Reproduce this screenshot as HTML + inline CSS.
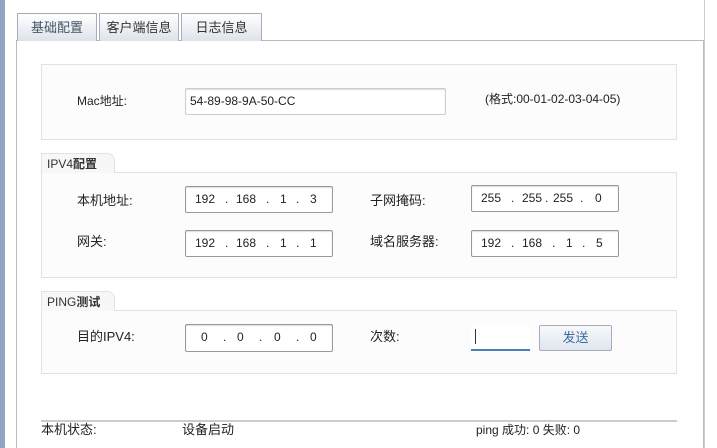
<!DOCTYPE html>
<html><head><meta charset="utf-8"><style>
*{margin:0;padding:0;box-sizing:border-box}
html,body{width:717px;height:448px;overflow:hidden}
body{background:#fff;position:relative;font-family:"Liberation Sans","Noto Sans CJK SC",sans-serif;font-size:12px;color:#222}
.a{position:absolute}
.tab{position:absolute;top:13px;height:28px;border:1px solid #aab;border-bottom:none;background:linear-gradient(#fff,#dde3ea);text-align:center;line-height:27px;font-size:13px;color:#333}
.box{position:absolute;border:1px solid #e2e2e2;background:#fcfcfc}
.in{position:absolute;border:1px solid #999;border-radius:2px;background:#fff;box-shadow:inset 0 1px 1px #ddd;font-size:12px;line-height:25px}
.lbl{position:absolute;font-size:12px;line-height:16px}
.gt{position:absolute;height:20px;border:1px solid #e2e2e2;border-bottom:none;border-radius:0 8px 0 0;background:#f7f7f7;padding-left:5px;line-height:20px;font-size:12px;color:#333}
.ip span{position:absolute;top:0}
</style></head><body>
<div class="a" style="left:0;top:0;width:5px;height:448px;background:#8ea6c4"></div>
<div class="a" style="left:704px;top:0;width:13px;height:448px;background:#fff;border-left:1px solid #ccc"></div>
<div class="a" style="left:16px;top:40px;width:688px;height:410px;border:1px solid #bbb"></div>
<div class="tab" style="left:17px;width:80px;color:#456">基础配置</div>
<div class="tab" style="left:99px;width:80px">客户端信息</div>
<div class="tab" style="left:181px;width:81px">日志信息</div>

<div class="box" style="left:41px;top:64px;width:636px;height:76px"></div>
<div class="lbl" style="left:77px;top:93px">Mac地址:</div>
<div class="in" style="left:185px;top:88px;width:261px;border-color:#ccc;padding-left:4px">54-89-98-9A-50-CC</div>
<div class="lbl" style="left:485px;top:91px">(格式:00-01-02-03-04-05)</div>

<div class="box" style="left:41px;top:172px;width:636px;height:106px"></div>
<div class="gt" style="left:41px;top:153px;width:74px">IPV4<b>配置</b></div>
<div class="lbl" style="left:77px;top:193px;font-size:13px">本机地址:</div>
<div class="lbl" style="left:77px;top:234px;font-size:13px">网关:</div>
<div class="lbl" style="left:370px;top:193px;font-size:13px">子网掩码:</div>
<div class="lbl" style="left:370px;top:234px;font-size:13px">域名服务器:</div>
<div class="in ip" style="left:185px;top:186px;width:148px;height:27px"><span style="left:9px">192</span><span style="left:39px">.</span><span style="left:50px">168</span><span style="left:80px">.</span><span style="left:94px">1</span><span style="left:110px">.</span><span style="left:124px">3</span></div>
<div class="in ip" style="left:185px;top:230px;width:148px;height:27px"><span style="left:9px">192</span><span style="left:39px">.</span><span style="left:50px">168</span><span style="left:80px">.</span><span style="left:94px">1</span><span style="left:110px">.</span><span style="left:124px">1</span></div>
<div class="in ip" style="left:471px;top:185px;width:148px;height:27px"><span style="left:9px">255</span><span style="left:39px">.</span><span style="left:50px">255</span><span style="left:73px">.</span><span style="left:81px">255</span><span style="left:108px">.</span><span style="left:123px">0</span></div>
<div class="in ip" style="left:471px;top:230px;width:148px;height:27px"><span style="left:9px">192</span><span style="left:39px">.</span><span style="left:50px">168</span><span style="left:80px">.</span><span style="left:94px">1</span><span style="left:110px">.</span><span style="left:124px">5</span></div>

<div class="box" style="left:41px;top:310px;width:636px;height:64px"></div>
<div class="gt" style="left:41px;top:291px;width:74px">PING<b>测试</b></div>
<div class="lbl" style="left:77px;top:329px;font-size:13px">目的IPV4:</div>
<div class="in ip" style="left:185px;top:324px;width:148px;height:28px"><span style="left:15px">0</span><span style="left:37px">.</span><span style="left:51px">0</span><span style="left:73px">.</span><span style="left:88px">0</span><span style="left:110px">.</span><span style="left:124px">0</span></div>
<div class="lbl" style="left:370px;top:329px;font-size:13px">次数:</div>
<div class="a" style="left:471px;top:325px;width:59px;height:26px;background:#fff;border-bottom:2px solid #4a7fb8"></div>
<div class="a" style="left:475px;top:329px;width:1px;height:15px;background:#333"></div>
<div class="a" style="left:539px;top:325px;width:73px;height:26px;border:1px solid #aab;border-radius:2px;background:linear-gradient(#f7f9fb,#dfe6ee);text-align:center;line-height:24px;font-size:13px;color:#3c6b9e">发送</div>

<div class="a" style="left:41px;top:420px;width:636px;height:2px;background:#ccc"></div>
<div class="lbl" style="left:41px;top:422px;font-size:13px">本机状态:</div>
<div class="lbl" style="left:182px;top:422px;font-size:13px">设备启动</div>
<div class="lbl" style="left:476px;top:422px;font-size:12px">ping 成功: 0 失败: 0</div>
</body></html>
